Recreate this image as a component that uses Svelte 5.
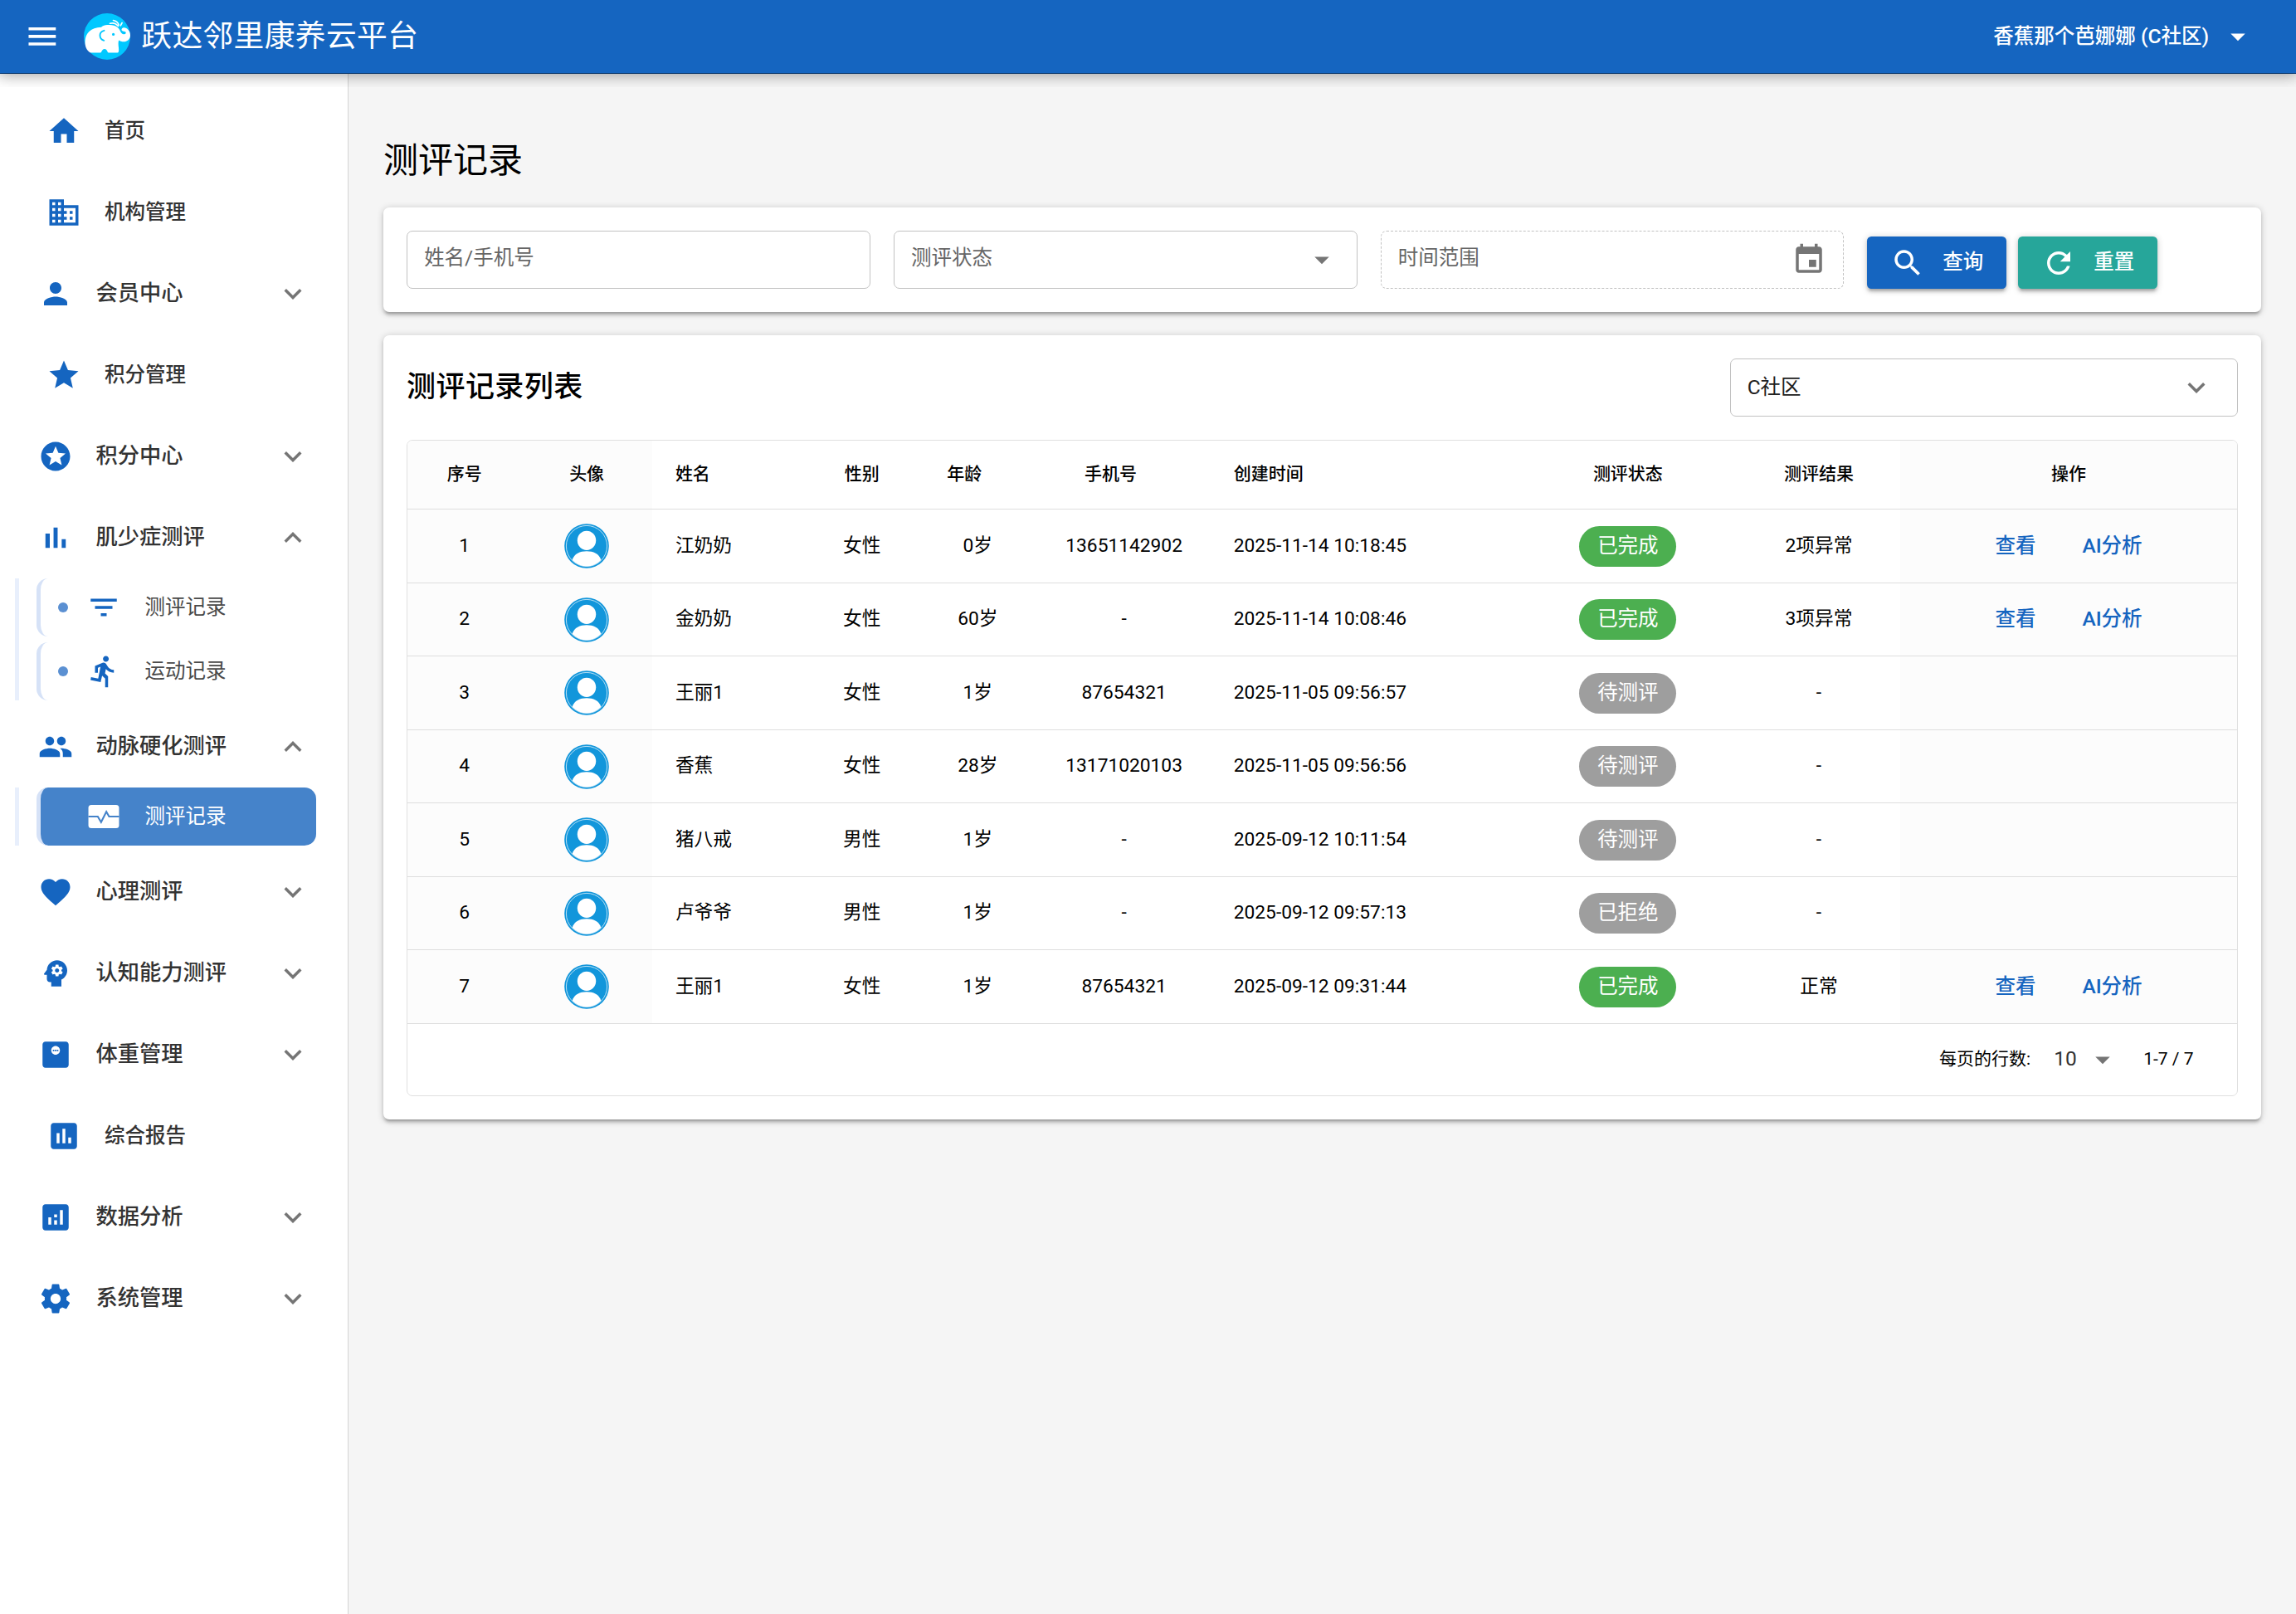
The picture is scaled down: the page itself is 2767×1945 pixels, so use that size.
<script>
  const icons = {
    menu: "M3 18h18v-2H3v2zm0-5h18v-2H3v2zm0-7v2h18V6H3z",
    home: "M10 20v-6h4v6h5v-8h3L12 3 2 12h3v8z",
    business:
      "M12 7V3H2v18h20V7H12zM6 19H4v-2h2v2zm0-4H4v-2h2v2zm0-4H4V9h2v2zm0-4H4V5h2v2zm4 12H8v-2h2v2zm0-4H8v-2h2v2zm0-4H8V9h2v2zm0-4H8V5h2v2zm10 12h-8v-2h2v-2h-2v-2h2v-2h-2V9h8v10zm-2-8h-2v2h2v-2zm0 4h-2v2h2v-2z",
    person:
      "M12 12c2.21 0 4-1.79 4-4s-1.79-4-4-4-4 1.79-4 4 1.79 4 4 4zm0 2c-2.67 0-8 1.34-8 4v2h16v-2c0-2.66-5.33-4-8-4z",
    star: "M12 17.27 18.18 21l-1.64-7.03L22 9.24l-7.19-.61L12 2 9.19 8.63 2 9.24l5.46 4.73L5.82 21z",
    stars:
      "M11.99 2C6.47 2 2 6.48 2 12s4.47 10 9.99 10C17.52 22 22 17.52 22 12S17.52 2 11.99 2zm4.24 16L12 15.45 7.77 18l1.12-4.81-3.73-3.23 4.92-.42L12 5l1.92 4.53 4.92.42-3.73 3.23L16.23 18z",
    barChart: "M5 9.2h3V19H5zM10.6 5h2.8v14h-2.8zm5.6 8H19v6h-2.8z",
    filter: "M10 18h4v-2h-4v2zM3 6v2h18V6H3zm3 7h12v-2H6v2z",
    run: "M13.49 5.48c1.1 0 2-.9 2-2s-.9-2-2-2-2 .9-2 2 .9 2 2 2zm-3.6 13.9l1-4.4 2.1 2v6h2v-7.5l-2.1-2 .6-3c1.3 1.5 3.3 2.5 5.5 2.5v-2c-1.9 0-3.5-1-4.3-2.4l-1-1.6c-.4-.6-1-1-1.7-1-.3 0-.5.1-.8.1l-5.2 2.2v4.7h2v-3.4l1.8-.7-1.6 8.1-4.9-1-.4 2 7 1.4z",
    people:
      "M16 11c1.66 0 2.99-1.34 2.99-3S17.66 5 16 5c-1.66 0-3 1.34-3 3s1.34 3 3 3zm-8 0c1.66 0 2.99-1.34 2.99-3S9.66 5 8 5C6.34 5 5 6.34 5 8s1.34 3 3 3zm0 2c-2.33 0-7 1.17-7 3.5V19h14v-2.5c0-2.33-4.67-3.5-7-3.5zm8 0c-.29 0-.62.02-.97.05 1.16.84 1.97 1.97 1.97 3.45V19h6v-2.5c0-2.33-4.67-3.5-7-3.5z",
    heart:
      "M12 21.35l-1.45-1.32C5.4 15.36 2 12.28 2 8.5 2 5.42 4.42 3 7.5 3c1.74 0 3.41.81 4.5 2.09C13.09 3.81 14.76 3 16.5 3 19.58 3 22 5.42 22 8.5c0 3.78-3.4 6.86-8.55 11.54L12 21.35z",
    psychology:
      "M13 8.57c-.79 0-1.43.64-1.43 1.43s.64 1.43 1.43 1.43 1.43-.64 1.43-1.43-.64-1.43-1.43-1.43zM13 3C9.25 3 6.2 5.94 6.02 9.64L4.1 12.2c-.25.33-.01.8.4.8H6v3c0 1.1.9 2 2 2h1v3h7v-4.68c2.36-1.12 4-3.53 4-6.32 0-3.87-3.13-7-7-7zm3 7c0 .13-.01.26-.02.39l.83.66c.08.06.1.16.05.25l-.8 1.39c-.05.09-.16.12-.24.09l-.99-.4c-.21.16-.43.29-.67.39L14 13.83c-.01.1-.1.17-.2.17h-1.6c-.1 0-.18-.07-.2-.17l-.15-1.06c-.25-.1-.47-.23-.68-.39l-.99.4c-.09.03-.2 0-.25-.09l-.8-1.39c-.05-.08-.03-.19.05-.25l.84-.66c-.01-.13-.02-.26-.02-.39s.02-.27.04-.39l-.85-.66c-.08-.06-.1-.16-.05-.26l.8-1.38c.05-.09.15-.12.24-.09l1 .4c.2-.15.43-.29.67-.39l.15-1.06c.02-.1.1-.17.2-.17h1.6c.1 0 .18.07.2.17l.15 1.06c.24.1.46.23.67.39l1-.4c.09-.03.2 0 .24.09l.8 1.38c.05.09.03.2-.05.26l-.85.66c.03.12.04.25.04.39z",
    weight:
      "M19 3H5c-1.1 0-2 .9-2 2v14c0 1.1.9 2 2 2h14c1.1 0 2-.9 2-2V5c0-1.1-.9-2-2-2zm-7 9c-1.66 0-3-1.34-3-3s1.34-3 3-3 3 1.34 3 3-1.34 3-3 3zM10.1 8.5h1v1h-1zM11.5 8.5h1v1h-1zM12.9 8.5h1v1h-1z",
    assessment:
      "M19 3H5c-1.1 0-2 .9-2 2v14c0 1.1.9 2 2 2h14c1.1 0 2-.9 2-2V5c0-1.1-.9-2-2-2zM9 17H7v-7h2v7zm4 0h-2V7h2v10zm4 0h-2v-4h2v4z",
    analytics:
      "M19 3H5c-1.1 0-2 .9-2 2v14c0 1.1.9 2 2 2h14c1.1 0 2-.9 2-2V5c0-1.1-.9-2-2-2zM9 17H7v-5h2v5zm4 0h-2v-3h2v3zm0-5h-2v-2h2v2zm4 5h-2V7h2v10z",
    settings:
      "M19.43 12.98c.04-.32.07-.64.07-.98s-.03-.66-.07-.98l2.11-1.65c.19-.15.24-.42.12-.64l-2-3.46c-.12-.22-.39-.3-.61-.22l-2.49 1c-.52-.4-1.08-.73-1.69-.98l-.38-2.65C14.46 2.18 14.25 2 14 2h-4c-.25 0-.46.18-.49.42l-.38 2.65c-.61.25-1.17.59-1.69.98l-2.49-1c-.23-.09-.49 0-.61.22l-2 3.46c-.13.22-.07.49.12.64l2.11 1.65c-.04.32-.07.65-.07.98s.03.66.07.98l-2.11 1.65c-.19.15-.24.42-.12.64l2 3.46c.12.22.39.3.61.22l2.49-1c.52.4 1.08.73 1.69.98l.38 2.65c.03.24.24.42.49.42h4c.25 0 .46-.18.49-.42l.38-2.65c.61-.25 1.17-.59 1.69-.98l2.49 1c.23.09.49 0 .61-.22l2-3.46c.12-.22.07-.49-.12-.64l-2.11-1.65zM12 15.5c-1.93 0-3.5-1.57-3.5-3.5s1.57-3.5 3.5-3.5 3.5 1.57 3.5 3.5-1.57 3.5-3.5 3.5z",
    more: "M16.59 8.59 12 13.17 7.41 8.59 6 10l6 6 6-6z",
    less: "M12 8l-6 6 1.41 1.41L12 10.83l4.59 4.58L18 14z",
    dropdown: "M7 10l5 5 5-5z",
    event:
      "M17 12h-5v5h5v-5zM16 1v2H8V1H6v2H5c-1.11 0-1.99.9-1.99 2L3 19c0 1.1.89 2 2 2h14c1.1 0 2-.9 2-2V5c0-1.1-.9-2-2-2h-1V1h-2zm3 18H5V8h14v11z",
    search:
      "M15.5 14h-.79l-.28-.27C15.41 12.59 16 11.11 16 9.5 16 5.91 13.09 3 9.5 3S3 5.91 3 9.5 5.91 16 9.5 16c1.61 0 3.09-.59 4.23-1.57l.27.28v.79l5 4.99L20.49 19l-4.99-5zm-6 0C7.01 14 5 11.99 5 9.5S7.01 5 9.5 5 14 7.01 14 9.5 11.99 14 9.5 14z",
    refresh:
      "M17.65 6.35C16.2 4.9 14.21 4 12 4c-4.42 0-7.99 3.58-7.99 8s3.57 8 7.99 8c3.73 0 6.84-2.55 7.73-6h-2.08c-.82 2.33-3.04 4-5.65 4-3.31 0-6-2.69-6-6s2.69-6 6-6c1.66 0 3.14.69 4.22 1.78L13 11h7V4l-2.35 2.35z",
  };

  let menu = $state([
    { label: "首页", icon: "home" },
    { label: "机构管理", icon: "business" },
    { label: "会员中心", icon: "person", children: [] },
    { label: "积分管理", icon: "star" },
    { label: "积分中心", icon: "stars", children: [] },
    {
      label: "肌少症测评",
      icon: "barChart",
      open: true,
      children: [
        { label: "测评记录", icon: "filter" },
        { label: "运动记录", icon: "run" },
      ],
    },
    {
      label: "动脉硬化测评",
      icon: "people",
      open: true,
      children: [{ label: "测评记录", icon: "monitor", active: true }],
    },
    { label: "心理测评", icon: "heart", children: [] },
    { label: "认知能力测评", icon: "psychology", children: [] },
    { label: "体重管理", icon: "weight", children: [] },
    { label: "综合报告", icon: "assessment" },
    { label: "数据分析", icon: "analytics", children: [] },
    { label: "系统管理", icon: "settings", children: [] },
  ]);

  const columns = [
    { label: "序号", width: 78.5, fixed: true },
    { label: "头像", width: 90, fixed: true },
    { label: "姓名", width: 106, left: true },
    { label: "性别", width: 77 },
    { label: "年龄", width: 82.5, sortable: true },
    { label: "手机号", width: 119, sortable: true },
    { label: "创建时间", width: 212, left: true },
    { label: "测评状态", width: 151 },
    { label: "测评结果", width: 112 },
    { label: "操作", width: 232, fixed: true },
  ];

  const rows = [
    { name: "江奶奶", sex: "女性", age: "0岁", phone: "13651142902", time: "2025-11-14 10:18:45", status: "已完成", result: "2项异常" },
    { name: "金奶奶", sex: "女性", age: "60岁", phone: "-", time: "2025-11-14 10:08:46", status: "已完成", result: "3项异常" },
    { name: "王丽1", sex: "女性", age: "1岁", phone: "87654321", time: "2025-11-05 09:56:57", status: "待测评", result: "-" },
    { name: "香蕉", sex: "女性", age: "28岁", phone: "13171020103", time: "2025-11-05 09:56:56", status: "待测评", result: "-" },
    { name: "猪八戒", sex: "男性", age: "1岁", phone: "-", time: "2025-09-12 10:11:54", status: "待测评", result: "-" },
    { name: "卢爷爷", sex: "男性", age: "1岁", phone: "-", time: "2025-09-12 09:57:13", status: "已拒绝", result: "-" },
    { name: "王丽1", sex: "女性", age: "1岁", phone: "87654321", time: "2025-09-12 09:31:44", status: "已完成", result: "正常" },
  ];

  const toggle = (item) => {
    item.open = !item.open;
  };
</script>

{#snippet icon(name)}
  <svg class="icon" viewBox="0 0 24 24" aria-hidden="true">
    {#if name === "monitor"}
      <rect x="1.45" y="4" width="21.1" height="16" rx="2" />
      <path class="pulse" d="M1.4 12h6.5l2.3 3.9 3.6-7.2 1.9 3.3h6.9" />
    {:else}
      <path fill-rule="evenodd" d={icons[name]} />
    {/if}
  </svg>
{/snippet}

<div class="app">
  <header>
    <button class="menu-btn" aria-label="菜单">{@render icon("menu")}</button>
    <svg class="logo" viewBox="0 0 56 56" aria-hidden="true">
      <circle cx="28" cy="28" r="28" fill="#00c8ff" />
      <path
        fill="#fff"
        d="M1.500 35.500C1.500 29 3.500 24.500 6.700 21.700c3.300-3 7.800-4.500 14.300-5 2-1.500 4.500-2.400 7.200-2.600 3-.2 6-.1 8.200.7 3.600 1.200 6.200 3.500 7.600 6.700.8 2 2.200 4 4.500 3.800 2-.2 2.800-1.800 1.800-2.800-1.300-1-3.800-.6-4.800-2.300-.3-1.300 1-2.700 2.700-2.900 3.600-.2 7.800 3.800 7.800 9.200 0 4.800-3.700 7.800-8 7.800-2.300 0-4.300-.8-5.800-1.800-.7 2-.6 4-.5 6 .2 3 1.300 8.200-.7 9H29.800c-1.700 0-1.300-4.400-4.800-4.400s-3.200 4.400-5 4.400H9C5 47.300 1.500 41 1.500 35.500z"
      />
      <path class="ear" d="M24.500 20.800c-3 .8-5 3-5 5.700 0 3 2 5.500 4.800 6.300" />
      <circle cx="35.600" cy="25.400" r="1.600" fill="#00c8ff" />
      <path class="spray" d="M31.500 12.300c3.500-1 7.500.2 10 3.200M35.500 8.500c3.500.7 5.700 2.700 6.700 5.500M44.300 14.800l1.800-3.300" />
    </svg>
    <span class="brand">跃达邻里康养云平台</span>
    <button class="user">香蕉那个芭娜娜 (C社区){@render icon("dropdown")}</button>
    <div class="header-shadow"></div>
  </header>

  <div class="body">
    <nav>
      {#each menu as item}
        <button class="item" class:group={item.children} onclick={() => toggle(item)}>
          {@render icon(item.icon)}
          <span class="label">{item.label}</span>
          {#if item.children}
            <span class="arrow">{@render icon(item.open ? "less" : "more")}</span>
          {/if}
        </button>
        {#if item.open && item.children}
          <div class="children">
            {#each item.children as child}
              <button class="child" class:active={child.active}>
                <span class="dot"></span>
                {@render icon(child.icon)}
                <span>{child.label}</span>
              </button>
            {/each}
          </div>
        {/if}
      {/each}
    </nav>

    <main>
      <h1>测评记录</h1>

      <section class="card filters">
        <div class="field"><span class="placeholder">姓名/手机号</span></div>
        <div class="field"><span class="placeholder">测评状态</span>{@render icon("dropdown")}</div>
        <div class="field dashed"><span class="placeholder">时间范围</span>{@render icon("event")}</div>
        <div class="actions">
          <button class="btn primary">{@render icon("search")}<span>查询</span></button>
          <button class="btn teal">{@render icon("refresh")}<span>重置</span></button>
        </div>
      </section>

      <section class="card">
        <div class="card-head">
          <h2>测评记录列表</h2>
          <div class="field select"><span>C社区</span>{@render icon("more")}</div>
        </div>

        <div class="table-box">
          <table>
            <colgroup>
              {#each columns as col}
                <col style="width: {col.width}px" />
              {/each}
            </colgroup>
            <thead>
              <tr>
                {#each columns as col}
                  <th class:fixed={col.fixed} class:left={col.left} class:sortable={col.sortable}>{col.label}</th>
                {/each}
              </tr>
            </thead>
            <tbody>
              {#each rows as row, i}
                <tr>
                  <td class="fixed">{i + 1}</td>
                  <td class="fixed">
                    <svg class="avatar" viewBox="0 0 56 56" aria-hidden="true">
                      <circle cx="28" cy="28" r="26.800" fill="#1296db" />
                      <circle cx="28" cy="28" r="24.600" fill="none" stroke="#fff" stroke-width=".7" />
                      <ellipse cx="28" cy="21.300" rx="11.200" ry="11.600" fill="#fff" />
                      <path fill="#fff" d="M10.600 45C13 37 20 34.200 28 34.200S43 37 45.400 45A24.400 24.400 0 0 1 10.600 45z" />
                    </svg>
                  </td>
                  <td class="left">{row.name}</td>
                  <td>{row.sex}</td>
                  <td>{row.age}</td>
                  <td>{row.phone}</td>
                  <td class="left">{row.time}</td>
                  <td><span class="chip" class:done={row.status === "已完成"}>{row.status}</span></td>
                  <td>{row.result}</td>
                  <td class="fixed">
                    {#if row.status === "已完成"}
                      <div class="links">
                        <button>查看</button>
                        <button>AI分析</button>
                      </div>
                    {/if}
                  </td>
                </tr>
              {/each}
            </tbody>
          </table>
          <div class="pager">
            <span>每页的行数:</span>
            <button class="page-size">10{@render icon("dropdown")}</button>
            <span>1-7 / 7</span>
          </div>
        </div>
      </section>
    </main>
  </div>
</div>

<style>
  :global(body) {
    background: #f5f5f5;
  }

  .app {
    --primary: #1565c0;
    --shadow: 0 1px 5px rgba(0, 0, 0, 0.2), 0 2px 2px rgba(0, 0, 0, 0.14), 0 3px 1px -2px rgba(0, 0, 0, 0.12);

    zoom: 1.75;
    display: flex;
    flex-direction: column;
    height: calc(100vh / 1.75);
    overflow: hidden;
    font-family: Roboto, "Noto Sans CJK SC", sans-serif;
    font-size: 14px;
    line-height: 1.5;
    color: #000;
  }

  button {
    border: 0;
    padding: 0;
    background: none;
    color: inherit;
    font: inherit;
    cursor: pointer;
  }

  .icon {
    display: block;
    flex: none;
    width: 24px;
    height: 24px;
    fill: currentColor;
  }

  header {
    position: relative;
    z-index: 2;
    flex: none;
    display: flex;
    align-items: center;
    height: 50px;
    padding: 0 28px 0 16.5px;
    background: var(--primary);
    border-bottom: 1px solid #114a8c;
    color: #fff;
  }
  .header-shadow {
    position: absolute;
    top: 0;
    left: 0;
    right: 0;
    bottom: -10px;
    overflow: hidden;
    pointer-events: none;
    z-index: -1;
  }
  .header-shadow::after {
    content: "";
    position: absolute;
    inset: 0 0 10px;
    box-shadow: 0 0 10px 2px rgba(0, 0, 0, 0.2), 0 0 10px rgba(0, 0, 0, 0.24);
  }
  .menu-btn .icon {
    width: 25px;
    height: 25px;
  }
  .logo {
    width: 32px;
    height: 32px;
    margin: 0 7.8px 0 16px;
  }
  .ear {
    fill: none;
    stroke: #00c8ff;
    stroke-width: 1.9;
    stroke-linecap: round;
  }
  .spray {
    fill: none;
    stroke: #fff;
    stroke-width: 1.6;
    stroke-linecap: round;
  }
  .brand {
    font-size: 21px;
    letter-spacing: 0.01em;
  }
  .user {
    display: flex;
    align-items: center;
    gap: 8px;
    margin-left: auto;
    padding-top: 0.4px;
    font-weight: 500;
  }

  .body {
    flex: 1;
    display: flex;
    min-height: 0;
  }

  nav {
    flex: none;
    box-sizing: border-box;
    width: 240px;
    padding-top: 11.8px;
    background: #fff;
    border-right: 1px solid #d4d4d4;
  }
  .item {
    display: flex;
    align-items: center;
    width: 100%;
    height: 56px;
    padding: 0 26px 0 32px;
    color: #333;
    font-weight: 500;
    text-align: left;
  }
  .item > .icon {
    color: var(--primary);
    margin-right: 16px;
  }
  .item.group {
    padding-left: 26px;
    font-size: 15px;
  }
  .arrow {
    margin-left: auto;
    color: #757575;
  }
  .children {
    display: flex;
    flex-direction: column;
    gap: 4px;
    margin: 0 21.7px 4px 10.3px;
    padding-left: 12px;
    border-left: 3px solid #e8effc;
  }
  .child {
    display: flex;
    align-items: center;
    height: 40px;
    padding-left: 12px;
    border-left: 3px solid #d6e2f7;
    border-radius: 8px;
    color: #4a4a4a;
  }
  .child .dot {
    width: 7px;
    height: 7px;
    margin-right: 12.7px;
    border-radius: 50%;
    background: #5b90d2;
  }
  .child .icon {
    margin-right: 16px;
    color: var(--primary);
  }
  .child.active {
    background: #4583ca;
    color: #fff;
  }
  .child.active .dot {
    visibility: hidden;
  }
  .child.active .icon {
    color: #fff;
  }
  .pulse {
    fill: none;
    stroke: #4583ca;
    stroke-width: 1.2;
  }

  main {
    flex: 1;
    min-width: 0;
    padding: 44.2px 24px 24px;
  }
  h1 {
    margin: 0 0 16.1px;
    font-size: 24px;
    font-weight: 400;
    line-height: 32px;
  }
  h2 {
    margin: 0;
    font-size: 20px;
    font-weight: 500;
    letter-spacing: 0.0125em;
  }
  .card {
    padding: 16px;
    background: #fff;
    border-radius: 4px;
    box-shadow: var(--shadow);
  }
  .filters {
    display: grid;
    grid-template-columns: repeat(3, 319.3px) auto;
    justify-content: start;
    align-items: end;
    gap: 16px;
    margin-bottom: 16px;
  }
  .field {
    box-sizing: border-box;
    display: flex;
    align-items: center;
    justify-content: space-between;
    height: 40px;
    padding: 0 11.5px;
    border: 1px solid #c2c2c2;
    border-radius: 4px;
    color: #666;
  }
  .field .icon {
    color: #757575;
  }
  .placeholder {
    padding-bottom: 1.4px;
  }
  .dashed {
    border-style: dashed;
  }
  .select {
    width: 350px;
    padding-right: 16.2px;
    color: #212121;
  }
  .actions {
    display: flex;
    gap: 8px;
  }
  .btn {
    display: flex;
    align-items: center;
    gap: 12px;
    height: 36px;
    padding: 0 16px;
    border-radius: 3px;
    box-shadow: var(--shadow);
    color: #fff;
    font-weight: 500;
  }
  .primary {
    background: var(--primary);
  }
  .teal {
    background: #26a69a;
  }

  .card-head {
    display: flex;
    align-items: center;
    justify-content: space-between;
    margin-bottom: 16px;
  }
  .table-box {
    border: 1px solid #e0e0e0;
    border-radius: 4px;
    overflow: hidden;
  }
  table {
    width: 100%;
    table-layout: fixed;
    border-collapse: separate;
    border-spacing: 0;
  }
  th,
  td {
    padding: 0;
    border-bottom: 1px solid #dedede;
    text-align: center;
  }
  th {
    height: 47px;
    font-size: 12px;
    font-weight: 500;
  }
  td {
    height: 50px;
    font-size: 13px;
  }
  .left {
    padding-left: 16px;
    text-align: left;
  }
  .sortable {
    padding-right: 18.4px;
  }
  .fixed {
    background: #fcfcfc;
  }
  .avatar {
    display: block;
    width: 32px;
    height: 32px;
    margin: 0 auto;
  }
  .chip {
    display: inline-flex;
    align-items: center;
    height: 28px;
    padding: 0 12.4px;
    border-radius: 16px;
    background: #9e9e9e;
    color: #fff;
    font-size: 14px;
    vertical-align: middle;
  }
  .chip.done {
    background: #4caf50;
  }
  .links {
    display: flex;
    justify-content: center;
    gap: 32px;
    color: var(--primary);
    font-size: 14px;
    font-weight: 500;
  }
  .pager {
    display: flex;
    align-items: center;
    justify-content: flex-end;
    height: 49px;
    padding-right: 30px;
    font-size: 12px;
  }
  .page-size {
    display: flex;
    align-items: center;
    margin: 0 16px;
    color: #333;
    font-size: 14px;
  }
  .page-size .icon {
    margin-left: 6px;
    color: #757575;
  }
</style>
